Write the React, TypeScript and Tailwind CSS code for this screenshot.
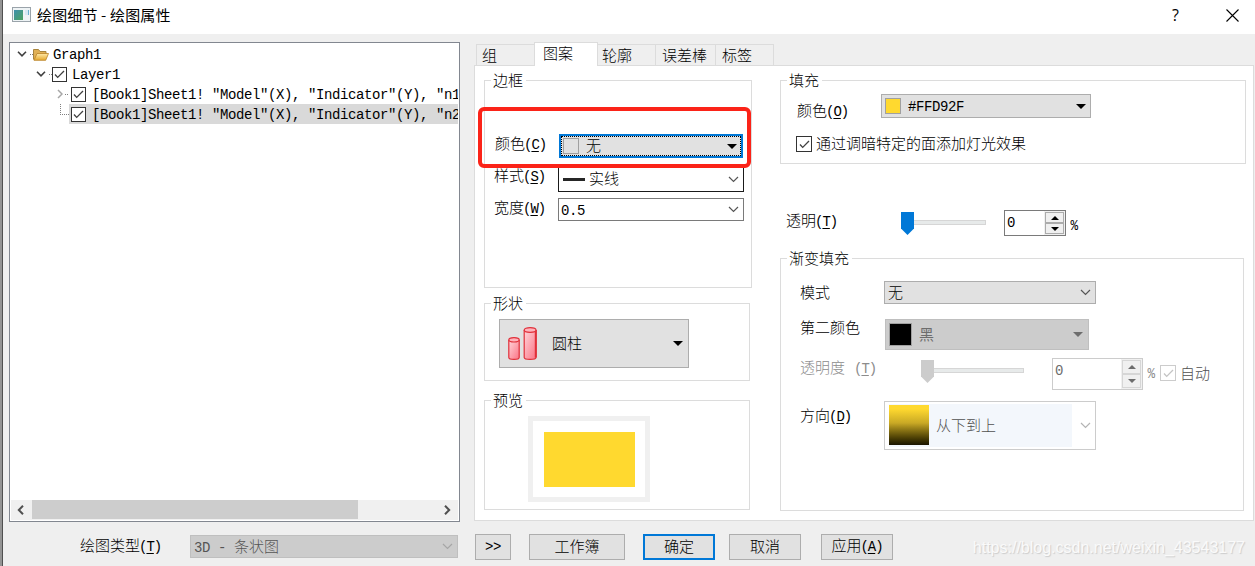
import type { ReactNode } from 'react';
import clsx from 'clsx';

const latin = "font-['Liberation_Mono','Noto_Sans_CJK_SC',monospace] text-[14px] tracking-[-0.4px]";

function Label({ text, hotkey, className }: { text: string; hotkey?: string; className?: string }) {
  return (
    <span className={clsx('flex h-5 shrink-0 items-center whitespace-pre pb-[2px] leading-5', className)}>
      {text}
      {hotkey && (
        <span className="-ml-px pt-[3px] font-['Liberation_Mono','Noto_Sans_CJK_SC',monospace] text-[14px] leading-5 tracking-[-1px]">
          (<span className="underline underline-offset-2">{hotkey}</span>)
        </span>
      )}
    </span>
  );
}

function Group({ title, className, children }: { title: string; className?: string; children?: ReactNode }) {
  return (
    <fieldset className={clsx('shrink-0 border border-[#dcdcdc]', className)}>
      <legend className="ml-[6px] h-[21px] pl-[2px] pr-[3px] leading-[19px]">{title}</legend>
      {children}
    </fieldset>
  );
}

function Chevron({ className }: { className?: string }) {
  return (
    <svg viewBox="0 0 11 7" className={clsx('h-[7px] w-[11px] shrink-0', className)} fill="none" stroke="currentColor" strokeWidth="1.2">
      <path d="M1 1l4.5 4.5L10 1" />
    </svg>
  );
}

function Triangle({ className, up }: { className?: string; up?: boolean }) {
  return (
    <svg viewBox="0 0 10 5" className={clsx('shrink-0', className)} fill="currentColor">
      <path d={up ? 'M0 5h10L5 0z' : 'M0 0h10L5 5z'} />
    </svg>
  );
}

function TreeArrow({ open }: { open?: boolean }) {
  return open ? (
    <svg viewBox="0 0 10 6" className="h-[6px] w-[10px] shrink-0" fill="none" stroke="#404040" strokeWidth="1.6">
      <path d="M1 .8l4 4 4-4" />
    </svg>
  ) : (
    <svg viewBox="0 0 6 10" className="h-[10px] w-[6px] shrink-0" fill="none" stroke="#a6a6a6" strokeWidth="1.5">
      <path d="M1 1l4 4-4 4" />
    </svg>
  );
}

function CheckBox({ size = 'h-4 w-4', disabled }: { size?: string; disabled?: boolean }) {
  return (
    <span
      className={clsx(
        'flex shrink-0 items-center justify-center border bg-white',
        size,
        disabled ? 'border-[#cccccc] text-[#c4c4c4]' : 'border-[#333333] text-[#404040]',
      )}
    >
      <svg viewBox="0 0 12 10" className="h-[9px] w-[11px]" fill="none" stroke="currentColor" strokeWidth="1.5">
        <path d="M1 5l3 3.2L11 1.2" />
      </svg>
    </span>
  );
}

function Spinner({ disabled }: { disabled?: boolean }) {
  return (
    <div
      className={clsx(
        'flex shrink-0 border bg-white',
        disabled ? 'h-8 w-[91px] border-[#cccccc] text-[#6d6d6d]' : 'h-[26px] w-[62px] border-[#7a7a7a]',
      )}
    >
      <span className={clsx('flex-1 pl-[2px] pt-px leading-[22px]', latin)}>0</span>
      <div className="flex w-[21px] flex-col bg-[#f0f0f0] p-px">
        {[true, false].map((up) => (
          <span
            key={String(up)}
            className={clsx(
              'flex flex-1 items-center justify-center border bg-[#f0f0f0]',
              disabled ? 'border-[#d6d6d6]' : 'border-[#acacac]',
            )}
          >
            <Triangle up={up} className="h-[4px] w-[8px]" />
          </span>
        ))}
      </div>
    </div>
  );
}

function Slider({ width, color, className }: { width: string; color: string; className?: string }) {
  return (
    <div className={clsx('flex h-[23px] shrink-0 items-start', width, className)}>
      <svg viewBox="0 0 13 23" className={clsx('ml-px h-[23px] w-[13px] shrink-0', color)} fill="currentColor">
        <path d="M0 0h13v16.5L6.5 23 0 16.5z" />
      </svg>
      <span className="mt-2 h-[5px] flex-1 border border-l-0 border-[#d6d6d6] bg-[#e7eaea]" />
    </div>
  );
}

function Button({ children, className, primary }: { children: ReactNode; className?: string; primary?: boolean }) {
  return (
    <button
      className={clsx(
        'flex h-[26px] shrink-0 items-center justify-center bg-[#e1e1e1] pb-[2px]',
        primary ? 'border-2 border-[#0078d7]' : 'border border-[#adadad]',
        className,
      )}
    >
      {children}
    </button>
  );
}

function TitleBar() {
  return (
    <header className="flex h-[34px] shrink-0 items-start bg-white font-normal">
      <svg viewBox="0 0 19 15" className="ml-[9px] mt-[7px] h-[15px] w-[19px]">
        <defs>
          <linearGradient id="app" x1="0" y1="0" x2="1" y2="1">
            <stop offset="0" stopColor="#3f8fae" />
            <stop offset="1" stopColor="#4aa35f" />
          </linearGradient>
        </defs>
        <rect x=".5" y=".5" width="18" height="14" fill="#eef3f5" stroke="#9aa3aa" />
        <rect x="2" y="3" width="9" height="10" fill="url(#app)" />
        <rect x="13" y="3" width="4" height="5" fill="#d5e8f2" />
        <path d="M16.5 3v5" stroke="#6bb0d0" />
      </svg>
      <h1 className="ml-[6px] mt-[5px] text-[15px] leading-5 tracking-[0.15px]">绘图细节 - 绘图属性</h1>
      <span className="ml-auto mt-[5px] font-['Open_Sans',sans-serif] text-[16px] leading-5">?</span>
      <svg viewBox="0 0 13 13" className="ml-[47px] mr-[16px] mt-[9px] h-[13px] w-[13px]" stroke="#000" strokeWidth="1.1">
        <path d="M.5.5l12 12M12.5.5l-12 12" />
      </svg>
    </header>
  );
}

const plots = [
  '[Book1]Sheet1! "Model"(X), "Indicator"(Y), "n1',
  '[Book1]Sheet1! "Model"(X), "Indicator"(Y), "n2',
];

function LayerTree() {
  return (
    <div className={clsx('flex h-[480px] w-[451px] flex-col overflow-hidden border border-[#828790] bg-white p-px leading-[18px]', latin)}>
      <div className="flex h-5 items-center pl-[6px]">
        <TreeArrow open />
        <span className="ml-[3px] w-[3px] border-t border-dotted border-[#808080]" />
        <svg viewBox="0 0 16 13" className="h-[13px] w-4">
          <defs>
            <linearGradient id="folder" x1="0" y1="0" x2="0" y2="1">
              <stop offset="0" stopColor="#ffe9a6" />
              <stop offset="1" stopColor="#e6a92e" />
            </linearGradient>
          </defs>
          <path d="M.5 11.5v-10h5l1.5 2h6v3" fill="#e0b055" stroke="#a8843c" />
          <path d="M1 12.3l3-6.8h11.5l-2.8 6.8z" fill="url(#folder)" stroke="#b98224" strokeWidth=".8" />
        </svg>
        <span className="ml-1 pt-[2px]">Graph1</span>
      </div>
      <div className="flex h-5 items-center pl-[25px]">
        <TreeArrow open />
        <span className="ml-[3px] w-[3px] border-t border-dotted border-[#808080]" />
        <CheckBox size="h-[15px] w-[15px]" />
        <span className="ml-[5px] pt-[2px]">Layer1</span>
      </div>
      {plots.map((plot, i) => (
        <div key={plot} className="flex h-5 pl-[46px]">
          {i === 0 ? (
            <span className="flex w-3 items-center">
              <TreeArrow />
              <span className="ml-[2px] w-[3px] border-t border-dotted border-[#808080]" />
            </span>
          ) : (
            <span className="ml-[3px] h-[11px] w-[9px] border-b border-l border-dotted border-[#808080]" />
          )}
          <span className={clsx('flex flex-1 items-center overflow-hidden whitespace-pre pl-[2px]', i === 1 && 'bg-[#d9d9d9]')}>
            <CheckBox size="h-[15px] w-[15px]" />
            <span className="ml-[6px] pt-[2px]">{plot}</span>
          </span>
        </div>
      ))}
      <div className="mt-auto flex h-5 items-center bg-[#f0f0f0]">
        <svg viewBox="0 0 7 10" className="ml-[6px] h-[10px] w-[7px]" fill="none" stroke="#505050" strokeWidth="2">
          <path d="M6 .8L1.8 5 6 9.2" />
        </svg>
        <span className="ml-2 h-[19px] w-[326px] self-start bg-[#cdcdcd]" />
        <svg viewBox="0 0 7 10" className="ml-auto mr-[7px] h-[10px] w-[7px]" fill="none" stroke="#505050" strokeWidth="2">
          <path d="M1 .8L5.2 5 1 9.2" />
        </svg>
      </div>
    </div>
  );
}

function Tabs() {
  const tab = 'h-[21px] border-l border-t border-[#dcdcdc] leading-[19px]';
  return (
    <div className="ml-[2px] flex h-[23px] shrink-0 items-end">
      <span className={clsx(tab, 'w-[58px] pl-[5px]')}>组</span>
      <span className="z-10 -mb-px h-6 w-16 border border-b-0 border-[#dcdcdc] bg-white pl-2 leading-[19px]">图案</span>
      <span className={clsx(tab, 'w-[57px] border-l-0 pl-1')}>轮廓</span>
      <span className={clsx(tab, 'w-[60px] pl-[6px]')}>误差棒</span>
      <span className={clsx(tab, 'w-[59px] border-r pl-[6px]')}>标签</span>
    </div>
  );
}

function Cylinders() {
  return (
    <svg viewBox="0 0 30 33" className="h-[33px] w-[30px]" stroke="#e0303a" strokeWidth="1.2">
      <defs>
        <linearGradient id="cyl" x1="0" y1="0" x2="1" y2="1">
          <stop offset="0" stopColor="#ffd5da" />
          <stop offset="1" stopColor="#fb7385" />
        </linearGradient>
      </defs>
      <path d="M1.8 13v17.5c0 1 2.3 1.9 5.2 1.9s5.2-.9 5.2-1.9V13" fill="url(#cyl)" />
      <ellipse cx="7" cy="12.8" rx="5.2" ry="2.2" fill="#ffb3bc" />
      <path d="M17.2 3v27.5c0 1 2.6 1.9 5.9 1.9s5.9-.9 5.9-1.9V3" fill="url(#cyl)" />
      <path d="M28.8 3v27.5" strokeWidth="2" />
      <ellipse cx="23.1" cy="3" rx="5.9" ry="2.3" fill="#ffb3bc" />
    </svg>
  );
}

function BorderColumn() {
  return (
    <div className="flex w-[268px] shrink-0 flex-col">
      <Group title="边框" className="h-[218px]">
        <div className="mt-[43px] flex h-[25px]">
          <Label text="颜色" hotkey="C" className="ml-[10px] w-[64px]" />
          <div className="h-6 w-[184px] border-2 border-[#0078d7] bg-[#e1e1e1]">
            <div className="flex h-full items-center border border-dotted border-black pl-px pr-[3px]">
              <span className="h-4 w-4 border border-[#a0a0a0]" />
              <span className="ml-[7px] pb-[2px] leading-[18px]">无</span>
              <Triangle className="ml-auto h-[5px] w-[10px]" />
            </div>
          </div>
        </div>
        <div className="mt-[8px] flex">
          <Label text="样式" hotkey="S" className="ml-[9px] -mt-px w-[64px]" />
          <div className="flex h-[25px] w-[186px] items-center border border-[#1a1a1a] bg-white pl-1 pr-1">
            <span className="h-[3px] w-[22px] bg-[#262626]" />
            <span className="ml-[4px] pb-[3px] leading-5">实线</span>
            <Chevron className="ml-auto text-[#555555]" />
          </div>
        </div>
        <div className="mt-[6px] flex">
          <Label text="宽度" hotkey="W" className="ml-[9px] w-[64px]" />
          <div className="flex h-[23px] w-[186px] items-center border border-[#7a7a7a] bg-white pl-[2px] pr-1">
            <span className={clsx('pt-[2px] leading-[18px]', latin)}>0.5</span>
            <Chevron className="ml-auto text-[#555555]" />
          </div>
        </div>
      </Group>
      <Group title="形状" className="mt-[5px] h-[88px] w-[266px]">
        <div className="ml-[14px] mt-[5px] flex h-[49px] w-[190px] items-center border border-[#adadad] bg-[#e1e1e1] pl-[7px] pr-[5px]">
          <Cylinders />
          <span className="ml-[15px]">圆柱</span>
          <Triangle className="ml-auto h-[5px] w-[10px]" />
        </div>
      </Group>
      <Group title="预览" className="mt-[9px] h-[120px] w-[266px]">
        <div className="ml-[43px] mt-[5px] h-[86px] w-[122px] border-[5px] border-[#f0f0f0] px-[11px] py-[11px]">
          <div className="h-[55px] w-[91px] bg-[#ffd92f]" />
        </div>
      </Group>
    </div>
  );
}

function FillColumn() {
  return (
    <div className="ml-7 flex w-[466px] shrink-0 flex-col">
      <Group title="填充" className="h-[94px]">
        <div className="mt-[3px] flex">
          <Label text="颜色" hotkey="O" className="ml-4 mt-[7px] w-[84px]" />
          <div className="flex h-6 w-[210px] items-center border border-[#adadad] bg-[#e1e1e1] pl-[3px] pr-1">
            <span className="h-4 w-4 border border-[#a0a0a0] bg-[#ffd92f]" />
            <span className={clsx('ml-[7px] pt-[2px] leading-[18px]', latin)}>#FFD92F</span>
            <Triangle className="ml-auto h-[5px] w-[10px]" />
          </div>
        </div>
        <div className="ml-[15px] mt-[13px] flex h-5 items-center">
          <CheckBox />
          <span className="ml-1 pb-[2px] leading-5">通过调暗特定的面添加灯光效果</span>
        </div>
      </Group>
      <div className="flex h-[84px] shrink-0 items-start pt-[46px]">
        <Label text="透明" hotkey="T" className="ml-[6px] mt-px w-[114px]" />
        <Slider width="w-[86px]" color="text-[#0078d7]" className="mt-[2px]" />
        <span className="w-[18px]" />
        <Spinner />
        <span className={clsx('ml-1 mt-[6px] scale-x-90 leading-5', latin)}>%</span>
      </div>
      <Group title="渐变填充" className="h-[263px] w-[464px]">
        <div className="mt-[12px] flex">
          <Label text="模式" className="ml-[19px] mt-[2px] w-[84px]" />
          <div className="flex h-[23px] w-[212px] items-center border border-[#adadad] bg-[#e1e1e1] pl-[3px] pr-1">
            <span className="pb-[2px] leading-[18px]">无</span>
            <Chevron className="ml-auto text-[#555555]" />
          </div>
        </div>
        <div className="mt-[15px] flex">
          <Label text="第二颜色" className="ml-[19px] -mt-px w-[85px]" />
          <div className="flex h-[31px] w-[204px] items-center border border-[#bfbfbf] bg-[#cccccc] pl-[3px] pr-[5px] text-[#6d6d6d]">
            <span className="h-[23px] w-[23px] border border-[#a0a0a0] bg-black" />
            <span className="ml-[7px] pb-px font-normal leading-5">黑</span>
            <Triangle className="ml-auto h-[5px] w-[10px]" />
          </div>
        </div>
        <div className="mt-2 flex h-8 text-[#8c8c8c]">
          <span className="ml-[19px] flex w-[120px]">
            <Label text="透明度" />
            <Label text="" hotkey="T" className="ml-[10px]" />
          </span>
          <Slider width="w-[104px]" color="text-[#cccccc]" className="mt-[2px]" />
          <span className="w-7" />
          <Spinner disabled />
          <span className={clsx('ml-1 mt-[6px] scale-x-90 leading-5', latin)}>%</span>
          <span className="ml-[5px] mt-[5px] flex h-5 items-center text-[#505050]">
            <CheckBox disabled />
            <span className="ml-1 pb-px leading-5">自动</span>
          </span>
        </div>
        <div className="mt-[11px] flex">
          <Label text="方向" hotkey="D" className="ml-[19px] mt-[5px] w-[84px]" />
          <div className="flex h-[49px] w-[212px] items-center border border-[#cccccc] bg-white pl-1 pr-1">
            <div className="flex h-[43px] w-[183px] items-center bg-[#f3f7fc] text-[#505050]">
              <span className="mb-px h-10 w-10 bg-linear-to-b from-[#ffd92f] from-10% via-[#c9a925] via-45% to-[#1a1500]" />
              <span className="ml-[7px] pb-px leading-5">从下到上</span>
            </div>
            <Chevron className="ml-auto text-[#b4b4b4]" />
          </div>
        </div>
      </Group>
    </div>
  );
}

export default function App() {
  return (
    <div className="relative flex h-[566px] w-[1255px] overflow-hidden bg-[#efefef] font-['Noto_Sans_CJK_SC',sans-serif] text-[15px] font-light text-black">
      <div className="w-[3px] shrink-0 border-r border-[#505050] bg-[#949494]" />
      <div className="flex min-w-0 flex-1 flex-col">
        <TitleBar />
        <main className="flex shrink-0 pl-[6px] pt-2">
          <LayerTree />
          <section className="ml-[14px] flex w-[780px] shrink-0 flex-col">
            <Tabs />
            <div className="flex h-[456px] border border-[#dcdcdc] bg-white pl-[9px] pt-1">
              <BorderColumn />
              <FillColumn />
            </div>
          </section>
        </main>
        <footer className="flex flex-1 items-start pt-3">
          <Label text="绘图类型" hotkey="T" className="ml-[77px] mt-[2px] w-[110px]" />
          <div className="mt-px flex h-[23px] w-[268px] items-center border border-[#bfbfbf] bg-[#cccccc] pl-[3px] pr-1 text-[#555555]">
            <span className={clsx('whitespace-pre pt-[2px] leading-[18px]', latin)}>3D - </span>
            <span className="pb-[2px] leading-5">条状图</span>
            <Chevron className="ml-auto text-[#a6a6a6]" />
          </div>
          <Button className="ml-[17px] w-9">
            <span className={clsx('pt-[3px]', latin)}>&gt;&gt;</span>
          </Button>
          <Button className="ml-[18px] w-24">工作簿</Button>
          <Button className="ml-[18px] w-[72px]" primary>
            确定
          </Button>
          <Button className="ml-[14px] w-[72px]">取消</Button>
          <Button className="ml-5 w-[72px]">
            <Label text="应用" hotkey="A" />
          </Button>
          <span className="ml-auto mr-[10px] mt-[2px] whitespace-nowrap font-['Liberation_Sans',sans-serif] text-[16px] leading-6 text-[#fafafa] [text-shadow:1px_1px_1px_#cccccc]">
            https://blog.csdn.net/weixin_43543177
          </span>
        </footer>
      </div>
      {/* highlight marker over the border colour row */}
      <div className="pointer-events-none absolute left-[478px] top-[107px] z-20 h-[61px] w-[273px] rounded-[6px] border-[4px] border-[#fb2318]" />
    </div>
  );
}
